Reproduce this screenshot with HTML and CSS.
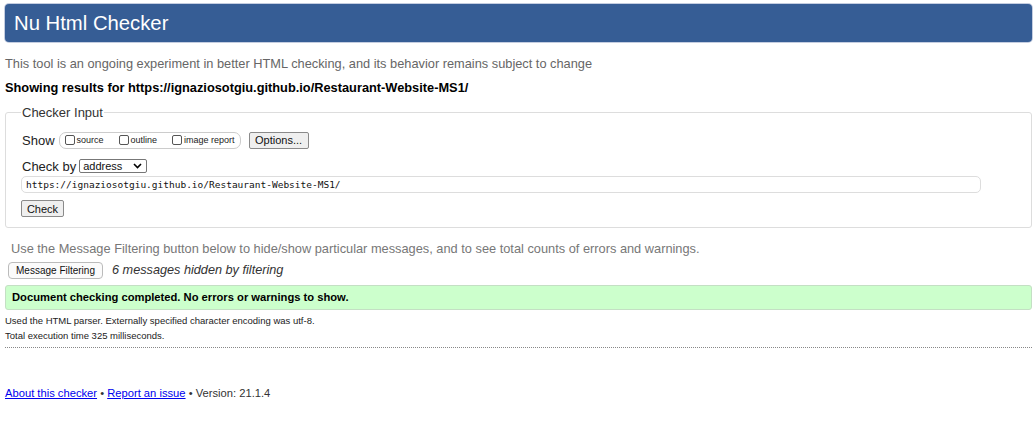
FILE: index.html
```html
<!DOCTYPE html>
<html>
<head>
<meta charset="utf-8">
<title>Nu Html Checker</title>
<link rel="stylesheet" href="styles.css">
</head>
<body>
<div class="page">
  <h1 class="title">Nu Html Checker</h1>
  <p class="intro">This tool is an ongoing experiment in better HTML checking, and its behavior remains subject to change</p>
  <p class="showing">Showing results for https://ignaziosotgiu.github.io/Restaurant-Website-MS1/</p>
  <fieldset class="checker">
    <legend class="legend">Checker Input</legend>
    <div class="row row-show">
      <span class="label">Show</span>
      <span class="group">
        <label class="opt"><span class="box"></span>source</label>
        <label class="opt"><span class="box"></span>outline</label>
        <label class="opt"><span class="box"></span>image report</label>
      </span>
      <span class="btn btn-options">Options...</span>
    </div>
    <div class="row row-check">
      <span class="label">Check by</span>
      <span class="select"><span>address</span><svg class="chev" width="9" height="6" viewBox="0 0 9 6"><path d="M1 1 L4.5 4.5 L8 1" fill="none" stroke="#000" stroke-width="1.6"/></svg></span>
    </div>
    <div class="url">https://ignaziosotgiu.github.io/Restaurant-Website-MS1/</div>
    <div class="row-btn"><span class="btn btn-check">Check</span></div>
  </fieldset>
  <p class="filter-note">Use the Message Filtering button below to hide/show particular messages, and to see total counts of errors and warnings.</p>
  <div class="filter-row">
    <span class="btn btn-filter">Message Filtering</span>
    <em class="hidden-count">6 messages hidden by filtering</em>
  </div>
  <div class="success">Document checking completed. No errors or warnings to show.</div>
  <p class="details first">Used the HTML parser. Externally specified character encoding was utf-8.</p>
  <p class="details">Total execution time 325 milliseconds.</p>
  <hr class="rule">
  <p class="footer"><a href="#">About this checker</a> • <a href="#">Report an issue</a> • Version: 21.1.4</p>
</div>
</body>
</html>
```
FILE: styles.css
```css
html, body {
  margin: 0;
  padding: 0;
  background: #fff;
}
body {
  font-family: "Liberation Sans", Arial, sans-serif;
  color: #000;
}
.page {
  padding: 4px 1px 0 5px;
}
.title {
  margin: 0;
  background: #365d95;
  color: #fff;
  font-weight: normal;
  font-size: 20.3px;
  line-height: 38px;
  height: 38px;
  padding: 0 9px;
  border-radius: 4px;
  box-shadow: 0 0 0 1px #c4cde0;
}
.intro {
  margin: 14px 0 0 0;
  font-size: 12.8px;
  color: #666;
  line-height: 16px;
}
.showing {
  margin: 8px 0 0 0;
  font-size: 12.8px;
  font-weight: bold;
  line-height: 16px;
}
.checker {
  margin: 9px 0 0 0;
  border: 1px solid #ddd;
  border-radius: 3px;
  padding: 4px 10px 10px 16px;
}
.legend {
  font-size: 13px;
  color: #333;
  padding: 0 1px;
  margin-left: -1px;
}
.row {
  display: flex;
  align-items: center;
  height: 18px;
}
.row-show {
  margin-top: 7px;
}
.label {
  font-size: 13px;
  color: #222;
  margin-right: 2px;
}
.group {
  display: inline-flex;
  align-items: center;
  border: 1px solid #ccc;
  border-radius: 7px;
  height: 15px;
  padding: 0 5px 0 5px;
  gap: 15px;
  margin-left: 2px;
}
.opt {
  display: inline-flex;
  align-items: center;
  font-size: 9px;
  color: #222;
}
.box {
  width: 8px;
  height: 8px;
  border: 1px solid #555;
  border-radius: 2px;
  margin-right: 2px;
  background: #fff;
}
.btn {
  display: inline-flex;
  align-items: center;
  justify-content: center;
  border: 1px solid #8a8a8a;
  border-radius: 2px;
  background: #efefef;
  color: #111;
  font-size: 11px;
  box-sizing: border-box;
}
.btn-options {
  margin-left: 8px;
  width: 60px;
  height: 17px;
}
.row-check {
  margin-top: 8px;
}
.select {
  display: inline-flex;
  align-items: center;
  justify-content: space-between;
  box-sizing: border-box;
  width: 68px;
  height: 14px;
  border: 1px solid #777;
  border-radius: 2px;
  font-size: 11px;
  padding: 0 4px 0 3px;
  margin-left: 1px;
  color: #111;
}
.url {
  margin-top: 1px;
  width: 960px;
  box-sizing: border-box;
  height: 17px;
  line-height: 15px;
  border: 1px solid #ddd;
  border-radius: 5px;
  padding: 0 4px;
  font-family: "DejaVu Sans Mono", "Liberation Mono", monospace;
  font-size: 9.5px;
  color: #111;
  margin-left: -1px;
}
.row-btn {
  display: flex;
  margin-top: 7px;
  margin-left: -1px;
}
.btn-check {
  width: 43px;
  height: 17px;
}
.filter-note {
  margin: 13px 0 0 6px;
  font-size: 12.8px;
  color: #777;
  line-height: 16px;
}
.filter-row {
  display: flex;
  align-items: center;
  margin: 5px 0 0 3px;
  gap: 9px;
}
.btn-filter {
  border-color: #bbb;
  background: #fbfbfb;
  border-radius: 4px;
  height: 17px;
  width: 95px;
  font-size: 10px;
}
.hidden-count {
  font-size: 12.7px;
  color: #333;
  position: relative;
  top: -1px;
}
.success {
  margin-top: 6px;
  background: #ccffcc;
  border: 1px solid #c4dfc4;
  border-radius: 3px;
  font-size: 11.2px;
  font-weight: bold;
  line-height: 23px;
  padding: 0 6px;
  box-sizing: border-box;
  height: 25px;
}
.details {
  margin: 0;
  font-size: 9.5px;
  color: #222;
  line-height: 15px;
}
.details.first {
  margin-top: 3px;
}
.rule {
  margin: 4px 0 0 0;
  border: 0;
  border-top: 1px dotted #888;
  height: 0;
}
.footer {
  margin: 39px 0 0 0;
  font-size: 11.2px;
  color: #333;
}
.footer a {
  color: #00e;
}
```
